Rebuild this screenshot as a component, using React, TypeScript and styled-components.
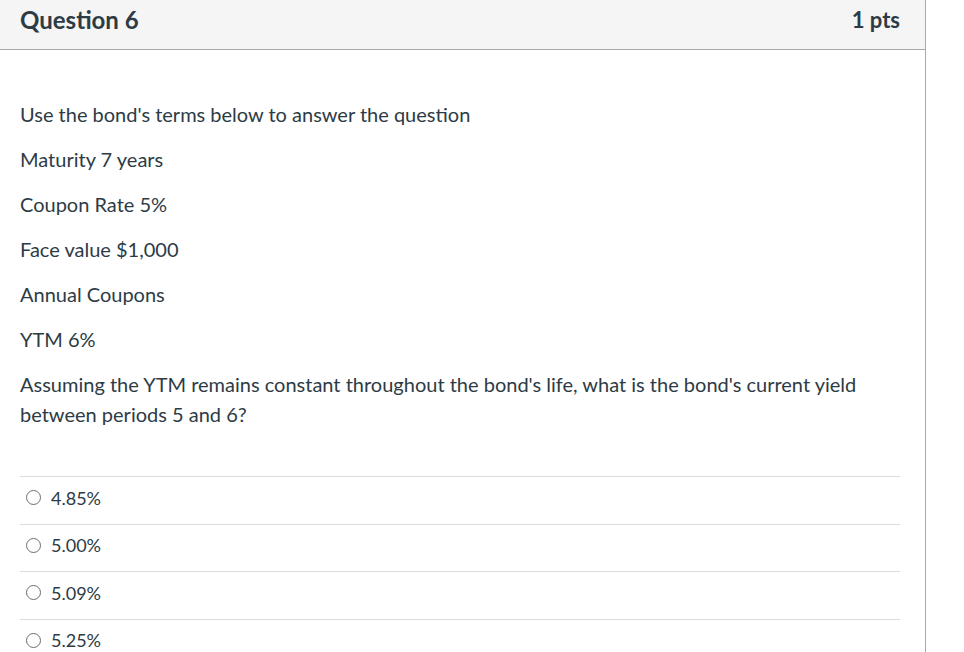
import styled, { createGlobalStyle } from "styled-components";

const GlobalStyle = createGlobalStyle`
  body {
    margin: 0;
    background: #fff;
    font-family: Lato, "Open Sans", sans-serif;
    color: #2d3b45;
  }
`;

const answers = ["4.85%", "5.00%", "5.09%", "5.25%"];

const paragraphs = [
  "Use the bond's terms below to answer the question",
  "Maturity 7 years",
  "Coupon Rate 5%",
  "Face value $1,000",
  "Annual Coupons",
  "YTM 6%",
  "Assuming the YTM remains constant throughout the bond's life, what is the bond's current yield between periods 5 and 6?",
];

const App = () => {
  return (
    <>
      <GlobalStyle />
      <Page>
        <QuestionCard>
          <Header>
            <Title>Question 6</Title>
            <Points>1 pts</Points>
          </Header>
          <Body>
            <QuestionText>
              {paragraphs.map((p) => (
                <Para key={p}>{p}</Para>
              ))}
            </QuestionText>
            <AnswerList>
              {answers.map((a) => (
                <AnswerRow key={a}>
                  <Radio type="radio" name="q6" />
                  <AnswerLabel>{a}</AnswerLabel>
                </AnswerRow>
              ))}
            </AnswerList>
          </Body>
        </QuestionCard>
      </Page>
    </>
  );
};

const Page = styled.div`
  width: 964px;
  height: 652px;
  overflow: hidden;
`;

const QuestionCard = styled.div`
  width: 926px;
  border-right: 1px solid #a8a8a8;
  min-height: 652px;
  box-sizing: border-box;
`;

const Header = styled.div`
  height: 49px;
  background: #f5f5f5;
  border-bottom: 1px solid #a8a8a8;
  display: flex;
  align-items: center;
  justify-content: space-between;
  padding: 0 25px 0 20px;
`;

const Title = styled.div`
  font-size: 24px;
  font-weight: bold;
  color: #2d3b45;
  margin-top: -11px;
`;

const Points = styled.div`
  font-size: 22px;
  font-weight: bold;
  color: #2d3b45;
  margin-top: -11px;
`;

const Body = styled.div`
  padding: 49px 25px 0 20px;
`;

const QuestionText = styled.div`
  font-size: 20px;
  line-height: 30px;
`;

const Para = styled.p`
  margin: 0 0 15px;
  max-width: 860px;
`;

const AnswerList = styled.div`
  margin-top: 47px;
`;

const AnswerRow = styled.label`
  display: flex;
  align-items: center;
  height: 47.5px;
  border-top: 1px solid #dadcde;
  padding-left: 6px;
  padding-bottom: 5px;
  box-sizing: border-box;
`;

const Radio = styled.input`
  appearance: none;
  width: 15px;
  height: 15px;
  margin: 0 10px 0 0;
  border: 1px solid #6e6e6e;
  border-radius: 50%;
  background: #fff;
`;

const AnswerLabel = styled.span`
  font-size: 18px;
`;

export default App;
